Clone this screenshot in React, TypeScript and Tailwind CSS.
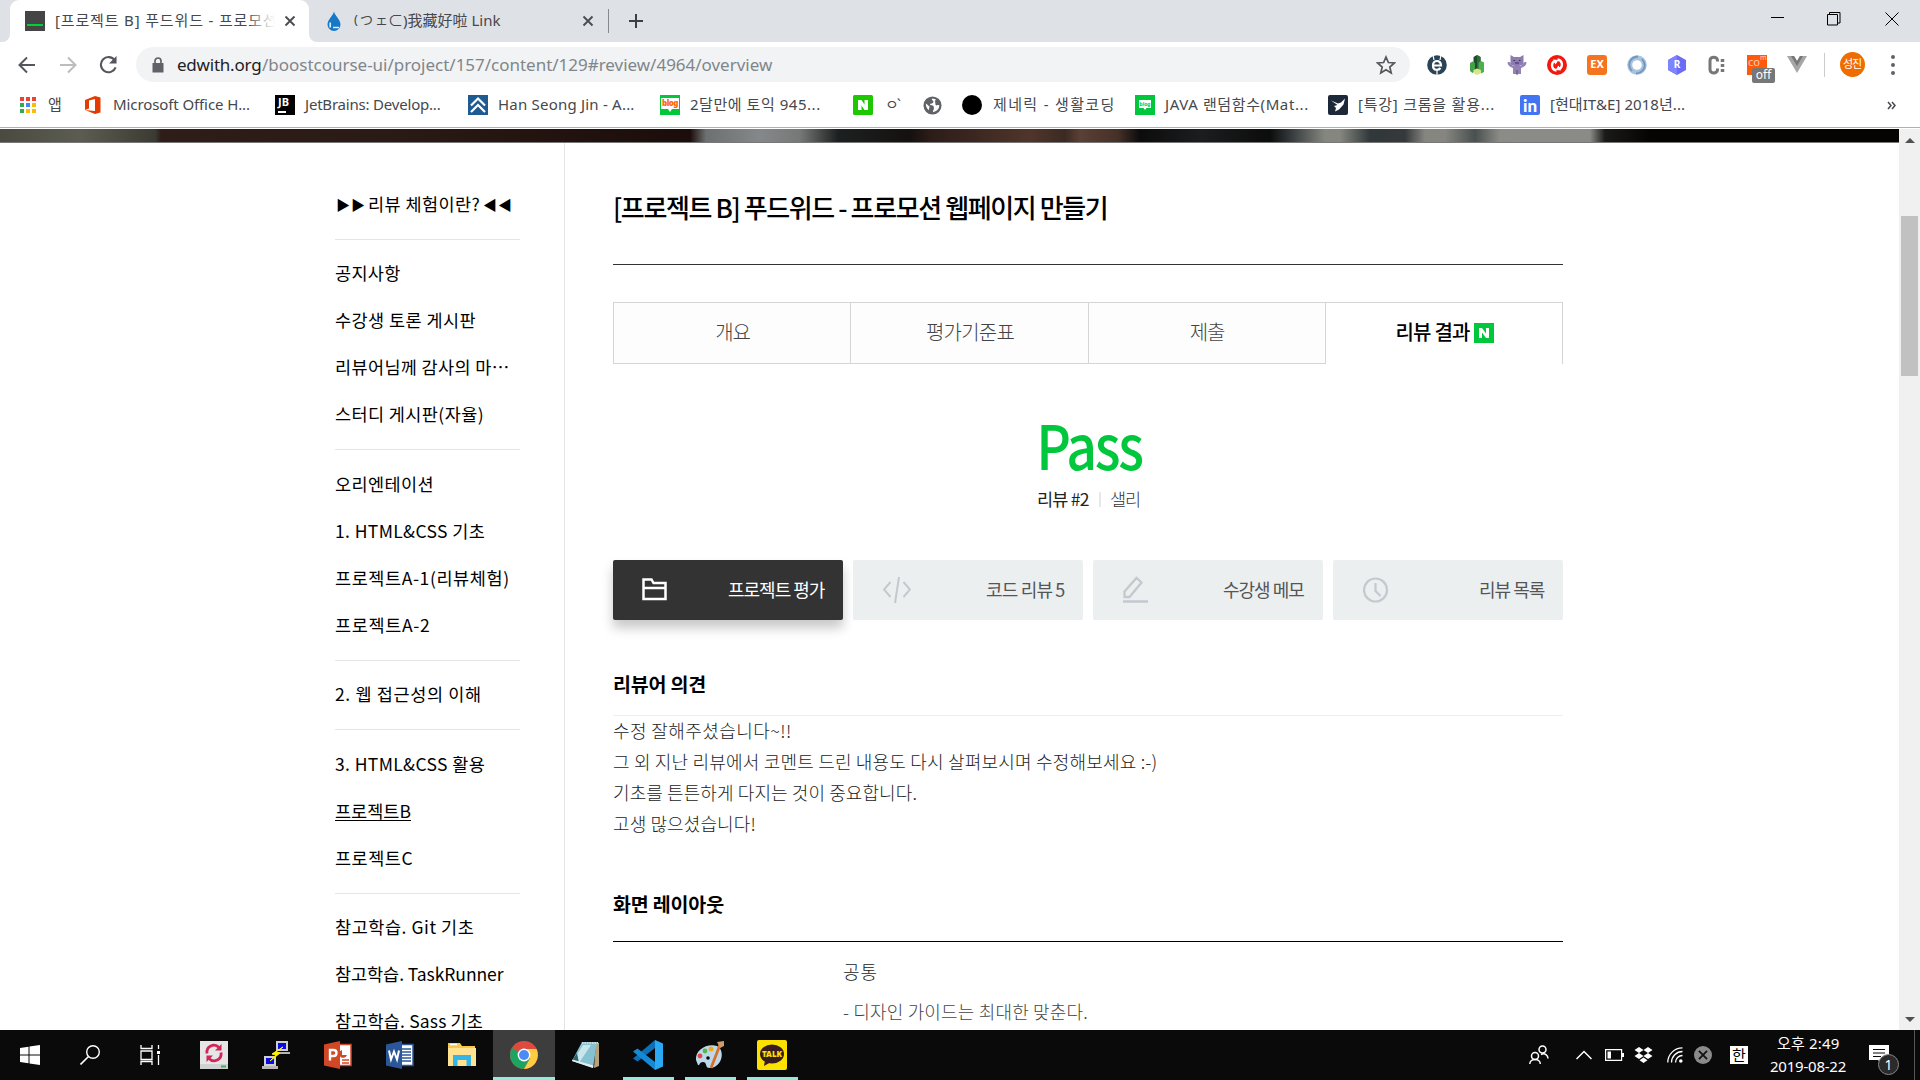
import { useLayoutEffect, useRef, useState } from "react";
import type { ReactNode } from "react";

const UI = "font-['Noto_Sans','Noto_Sans_CJK_KR',sans-serif]";
const PAGE = "font-['Noto_Sans_CJK_KR',sans-serif]";

/** Single line of text whose tracking is adjusted so that it fills `w` pixels. */
function Fit({ w, className = "", children }: { w: number; className?: string; children: string }) {
  const ref = useRef<HTMLSpanElement>(null);
  const [spacing, setSpacing] = useState(0);
  useLayoutEffect(() => {
    const natural = ref.current!.offsetWidth;
    setSpacing((w - natural) / Math.max(1, [...children].length - 1));
  }, [w, children]);
  return (
    <span className={`inline-block shrink-0 whitespace-nowrap ${className}`} style={{ width: w }}>
      <span ref={ref} className="inline-block" style={{ letterSpacing: spacing }}>{children}</span>
    </span>
  );
}

function Svg({ s = 20, vb = "0 0 20 20", className = "", children }: { s?: number; vb?: string; className?: string; children: ReactNode }) {
  return (
    <svg width={s} height={s} viewBox={vb} fill="none" className={`shrink-0 ${className}`}>
      {children}
    </svg>
  );
}

function CloseX() {
  return (
    <Svg s={12} vb="0 0 12 12">
      <path d="M1.5 1.5l9 9M10.5 1.5l-9 9" stroke="#4a4d51" strokeWidth="1.9" />
    </Svg>
  );
}

function TabStrip() {
  return (
    <div className="flex h-[42px] bg-[#dee1e6] text-[15px] text-[#45484c]">
      <div className="w-[10px] bg-white">
        <div className="h-full rounded-br-[8px] bg-[#dee1e6]" />
      </div>
      <div className="flex w-[299px] items-center rounded-t-[9px] bg-white pl-[15px]">
        <div className="flex h-5 w-5 items-end justify-center bg-[#454545] pb-[5px]">
          <div className="h-[2px] w-4 bg-[#00d13a]" />
        </div>
        <div className="relative mb-[2px] ml-[10px] w-[220px] overflow-hidden">
          <Fit w={222}>[프로젝트 B] 푸드위드 - 프로모션</Fit>
          <div className="absolute inset-y-0 right-0 w-6 bg-linear-to-r from-white/20 to-white" />
        </div>
        <div className="ml-[9px]"><CloseX /></div>
      </div>
      <div className="w-[9px] bg-white">
        <div className="h-full rounded-bl-[8px] bg-[#dee1e6]" />
      </div>
      <div className="flex items-center pl-[9px]">
        <svg width="14" height="20" viewBox="0 0 14 20" className="shrink-0">
          <path d="M7 0.5C8 5 13.5 8.5 13.5 13.5A6.4 6.4 0 0 1 .5 13.5C.5 8.500 6 5 7 .5z" fill="#1679c8" />
          <path d="M3.200 11.500v5M6 16.500h6" stroke="#fff" strokeWidth="1.700" opacity=".85" />
        </svg>
        <Fit w={34} className="mb-[2px] ml-[13px] text-[13px]">(つェ</Fit>
        <Fit w={112} className="mb-[2px]">⊂)我藏好啦 Link</Fit>
        <div className="ml-[82px]"><CloseX /></div>
        <div className="ml-[14px] h-6 w-px bg-[#85888c]" />
        <Svg s={16} vb="0 0 16 16" className="ml-[19px]">
          <path d="M8 1v14M1 8h14" stroke="#3c4043" strokeWidth="2" />
        </Svg>
      </div>
      <div className="ml-auto flex items-start pt-3 pr-[21px]">
        <Svg s={14} vb="0 0 14 14"><path d="M0 5.500h13" stroke="#000" /></Svg>
        <Svg s={14} vb="0 0 14 14" className="ml-[42px]">
          <path d="M.5 2.500h10v10.500H.5zM2.500 2.500v-2h10.500v10.500h-2.500" stroke="#000" />
        </Svg>
        <Svg s={14} vb="0 0 14 14" className="ml-[44px]"><path d="M.5.5l13 13M13.500.5l-13 13" stroke="#000" /></Svg>
      </div>
    </div>
  );
}

function Extensions() {
  return (
    <div className="ml-[17px] flex items-center gap-5">
      <Svg>
        <circle cx="10" cy="10" r="9.800" fill="#2a4456" />
        <path d="M6 10.500h8c0-6-8-6-8 0s6 4.500 7.500 2.500" stroke="#fff" strokeWidth="2.200" />
        <path d="M10 15v5M6 0l1 5M14 0l-1 5" stroke="#fff" strokeWidth="1.200" />
      </Svg>
      <Svg>
        <path d="M6.500 2L10 0l3.500 2v13h-7z" fill="#1d4d2b" /><path d="M10 0l3.500 2v13l-3.500-1z" fill="#2f6d36" />
        <path d="M3 8l2.500-1.500L8 8v8l-2.500 2L3 16z" fill="#43a047" /><path d="M11.500 7.500L14 6l3 1.500V17l-3 1.500-2.500-2z" fill="#4caf50" />
        <path d="M6.500 15l3.500-1.500 4 1.500v3l-4 2-3.500-2z" fill="#d5e58c" />
      </Svg>
      <Svg>
        <path d="M3.500 0L7 2h6l3.500-2v8c0 2-2 3-6.500 3s-6.500-1-6.500-3z" fill="#8c7bb0" />
        <path d="M.5 7h2L6 11h8l3.500-4h2c0 3-2 5-5.500 6v6H6v-6C2.500 12 .5 10 .5 7z" fill="#9283b4" />
        <path d="M6.500 5.500h1.500M12 5.500h1.500M8 8h4" stroke="#3c2f5c" strokeWidth="1.200" /><path d="M10 15v5" stroke="#5c4d80" />
      </Svg>
      <Svg>
        <circle cx="10" cy="10" r="10" fill="#f3170d" />
        <path d="M9.500 15.500C4.500 15 3.500 8.500 7.500 6M10.500 4.500c5 .5 6 7 2 9.500" stroke="#fff" strokeWidth="2.300" />
        <path d="M6 4.500l5.500.5-3 4.500zM14 15.500l-5.500-.5 3-4.500z" fill="#fff" />
      </Svg>
      <div className="flex h-5 w-5 items-center justify-center rounded-[3px] bg-[#f5751f] text-[11px] font-bold text-white">EX</div>
      <Svg>
        <circle cx="10" cy="10" r="7.300" stroke="#a9c3dd" strokeWidth="5" />
        <path d="M5 16C-1 9 4 2 11 1.500M15 4c6 7 1 14-6 14.500" stroke="#6f97c0" strokeWidth="1.800" />
      </Svg>
      <div className="relative flex h-5 w-5 items-center justify-center text-[10px] font-bold text-white">
        <Svg className="absolute"><path d="M10 0l9 5v10l-9 5-9-5V5z" fill="#6b6df5" /><path d="M1 5l9-5v20l-9-5z" fill="#7f83ff" /></Svg>
        <span className="relative">R</span>
      </div>
      <Svg>
        <path d="M10.500 6.500V5.500c0-4.500-7.500-4.500-7.500 0v9c0 4.500 7.500 4.500 7.500 0v-1" stroke="#777" strokeWidth="3" />
        <path d="M15.500 4v14" stroke="#777" strokeWidth="3.500" strokeDasharray="3 2" />
      </Svg>
      <div className="relative h-5 w-5 bg-[#ff5a0c] text-white/70">
        <span className="absolute top-[2px] left-px text-[11px] leading-[10px]">co</span>
        <span className="absolute top-0 left-[13px] text-[7px] leading-[6px]">m</span>
        <span className="absolute top-[13px] left-[5px] flex h-[15px] w-[23px] items-center justify-center rounded-[2px] bg-[#777] text-[12px] leading-none text-white">off</span>
      </div>
      <Svg>
        <path d="M0 1h7l3 5 3-5h7L10 18z" fill="#a6a6a6" /><path d="M4 1h3l3 5 3-5h3l-6 10z" fill="#777" />
      </Svg>
    </div>
  );
}

function Toolbar() {
  return (
    <div className="flex h-[45px] items-center bg-white">
      <Svg s={18} vb="0 0 18 18" className="ml-[18px]"><path d="M17 9H2M9 1.500L1.500 9 9 16.500" stroke="#54575b" strokeWidth="2" /></Svg>
      <Svg s={18} vb="0 0 18 18" className="ml-[23px]"><path d="M1 9h15M9 1.500L16.500 9 9 16.500" stroke="#babcbe" strokeWidth="2" /></Svg>
      <Svg s={19} vb="0 0 20 20" className="ml-[22px]">
        <path d="M16.500 5.500A8 8 0 1 0 17.500 13" stroke="#54575b" strokeWidth="2.200" /><path d="M18.500 1v8h-8z" fill="#54575b" />
      </Svg>
      <div className="ml-[18px] flex h-[35px] w-[1274px] items-center rounded-full bg-[#f1f3f4] pl-4">
        <svg width="12" height="16" viewBox="0 0 12 16" className="shrink-0">
          <path d="M.5 6h11v9.500H.5z" fill="#5f6368" /><path d="M3 7V4a3 3 0 0 1 6 0v3" fill="none" stroke="#5f6368" strokeWidth="1.700" />
        </svg>
        <Fit w={85} className="ml-[13px] text-[17px] text-[#202124]">edwith.org</Fit>
        <Fit w={510} className="text-[17px] text-[#80868b]">/boostcourse-ui/project/157/content/129#review/4964/overview</Fit>
        <Svg s={20} className="mr-[14px] ml-auto">
          <path d="M10 2l2.400 5.500 6 .5-4.600 4 1.400 5.900L10 14.800l-5.200 3.100L6.200 12 1.600 8l6-.5z" stroke="#54575b" strokeWidth="1.700" />
        </Svg>
      </div>
      <Extensions />
      <div className="ml-[17px] h-6 w-px bg-[#c9cbce]" />
      <div className="ml-[15px] flex h-[25px] w-[25px] items-center justify-center rounded-full bg-[#ef6c00] text-[11px] text-white">
        <Fit w={19}>성진</Fit>
      </div>
      <div className="ml-[26px] flex w-1 flex-col gap-1">
        <div className="h-1 w-1 rounded-full bg-[#5f6368]" />
        <div className="h-1 w-1 rounded-full bg-[#5f6368]" />
        <div className="h-1 w-1 rounded-full bg-[#5f6368]" />
      </div>
    </div>
  );
}

const APP_COLORS = ["bg-[#ea4335]", "bg-[#ea4335]", "bg-[#ea4335]", "bg-[#34a853]", "bg-[#4285f4]", "bg-[#fbbc04]", "bg-[#34a853]", "bg-[#fbbc04]", "bg-[#fbbc04]"];

function BlogIcon({ small = false }: { small?: boolean }) {
  return (
    <div className="relative flex h-5 w-5 shrink-0 items-center justify-center bg-[#00c73c]">
      <Svg className="absolute inset-0">
        {small ? <path d="M4 5h12v8h-4.500L10 15l-1.500-2H4z" fill="#fff" /> : <path d="M1 3h18v11h-7l-2 3-2-3H1z" fill="#fff" />}
      </Svg>
      <span className={small ? "relative mb-[2px] text-[5px] leading-none font-bold text-[#00c73c]" : "relative mb-1 text-[8px] leading-none font-black tracking-[-0.5px] text-[#ff6a00]"}>blog</span>
    </div>
  );
}

function Bookmarks() {
  return (
    <div className="flex h-[40px] items-center bg-white pb-[4px] text-[15px] text-[#45484c]">
      <div className="ml-5 grid w-4 shrink-0 grid-cols-3 gap-[2px]">
        {APP_COLORS.map((c, i) => <div key={i} className={`h-1 w-1 ${c}`} />)}
      </div>
      <Fit w={14} className="mb-[2px] ml-3">앱</Fit>
      <svg width="16" height="18" viewBox="0 0 16 18" className="ml-[23px] shrink-0">
        <path d="M0 4l10-4 5.500 1.500v15L10 18 0 14l10 1V3L4 4.500v8L0 14z" fill="#e43c00" />
      </svg>
      <Fit w={137} className="mb-[2px] ml-3">Microsoft Office H...</Fit>
      <div className="ml-[25px] flex h-5 w-5 shrink-0 flex-col bg-black pl-[3px] text-[11px] leading-[13px] font-bold text-white">JB<div className="mt-[3px] h-[2px] w-2 bg-white" /></div>
      <Fit w={136} className="mb-[2px] ml-[10px]">JetBrains: Develop...</Fit>
      <Svg className="ml-[27px]"><path d="M0 0h20v20H0z" fill="#1f5b93" /><path d="M3 10.500l7-7 7 7M3 17l7-7 7 7" stroke="#fff" strokeWidth="2.200" /></Svg>
      <Fit w={136} className="mb-[2px] ml-[10px]">Han Seong Jin - A...</Fit>
      <div className="ml-[26px]"><BlogIcon /></div>
      <Fit w={130} className="mb-[2px] ml-[10px]">2달만에 토익 945...</Fit>
      <Svg className="ml-[33px]"><rect width="20" height="20" rx="1.500" fill="#1ec800" /><path d="M5 15V5h3.500l3 4.600V5H15v10h-3.500l-3-4.600V15z" fill="#fff" /></Svg>
      <Fit w={16} className="mb-[2px] ml-[12px]">ㅇ`</Fit>
      <Svg s={19} className="ml-[22px]">
        <circle cx="10" cy="10" r="9.500" fill="#5f6368" />
        <path d="M9.500 2.500c-1 2 3 2.500 1 4.500s-3 0-3 2.500c3 0 4 1 4 3s-1 2-1 4.500c6-1 7-6 6.500-7.500-2 0-2.500 1-3.500 0s0-3-1-4l1-2M3 8c1.500 1 3 3 4 3l-1 4c-2-2-3-4-3-7z" fill="#fff" />
      </Svg>
      <div className="ml-5 h-5 w-5 shrink-0 rounded-full bg-black" />
      <Fit w={121} className="mb-[2px] ml-[11px]">제네릭 - 생활코딩</Fit>
      <div className="ml-[21px]"><BlogIcon small /></div>
      <Fit w={143} className="mb-[2px] ml-[10px]">JAVA 랜덤함수(Mat...</Fit>
      <Svg className="ml-[20px]"><rect width="20" height="20" rx="2" fill="#1d2838" /><path d="M3 5.500l7 3 3-1 4-4-1.500 6-4.500 5-4 2 1-3.500-2-2 3.500-1z" fill="#fff" /></Svg>
      <Fit w={136} className="mb-[2px] ml-[10px]">[특강] 크롬을 활용...</Fit>
      <div className="ml-[26px] flex h-5 w-5 shrink-0 items-center justify-center rounded-[2px] bg-[#4374f2] font-['Lato'] text-[17px] leading-none font-black text-white">in</div>
      <Fit w={135} className="mb-[2px] ml-[10px]">[현대IT&amp;E] 2018년...</Fit>
      <Svg s={9} vb="0 0 9 9" className="mr-[24px] ml-auto"><path d="M1 1l3 3.500L1 8M5 1l3 3.500L5 8" stroke="#45484c" strokeWidth="1.500" /></Svg>
    </div>
  );
}

const SIDEBAR: { label: string; w: number; current?: boolean }[][] = [
  [{ label: "공지사항", w: 65 }, { label: "수강생 토론 게시판", w: 141 }, { label: "리뷰어님께 감사의 마⋯", w: 174 }, { label: "스터디 게시판(자율)", w: 149 }],
  [{ label: "오리엔테이션", w: 99 }, { label: "1. HTML&CSS 기초", w: 150 }, { label: "프로젝트A-1(리뷰체험)", w: 174 }, { label: "프로젝트A-2", w: 95 }],
  [{ label: "2. 웹 접근성의 이해", w: 146 }],
  [{ label: "3. HTML&CSS 활용", w: 150 }, { label: "프로젝트B", w: 76, current: true }, { label: "프로젝트C", w: 78 }],
  [{ label: "참고학습. Git 기초", w: 139 }, { label: "참고학습. TaskRunner", w: 169 }, { label: "참고학습. Sass 기초", w: 148 }],
];

function Sidebar() {
  return (
    <nav className="ml-[335px] w-[230px] shrink-0 border-r border-[#e5e5e5] pt-[37px] pr-[44px] text-[17.5px] text-black">
      <div className="flex h-[60px] items-start border-b border-[#e5e5e5]">
        <div className="flex h-[47px] items-center pt-px">
          <Fit w={29} className="ml-px text-[14px]">▶▶</Fit>
          <Fit w={112} className="ml-[3px]">리뷰 체험이란?</Fit>
          <Fit w={29} className="ml-[3px] text-[14px]">◀◀</Fit>
        </div>
      </div>
      {SIDEBAR.map((group, i) => (
        <ul key={i} className="border-b border-[#e5e5e5] pt-[10px] pb-[11.400px]">
          {group.map((item) => (
            <li key={item.label} className="flex h-[47px] items-center">
              <Fit w={item.w} className={item.current ? "border-b border-black leading-[19px]" : ""}>{item.label}</Fit>
            </li>
          ))}
        </ul>
      ))}
    </nav>
  );
}

const TABS = [{ label: "개요", w: 36 }, { label: "평가기준표", w: 89 }, { label: "제출", w: 36 }];

const ACTIONS = [
  { label: "프로젝트 평가", w: 97, icon: <path d="M2.500 3.500h8l2 3.500h12v16h-22zM2.500 12h22" strokeWidth="2.500" /> },
  { label: "코드 리뷰 5", w: 79, icon: <path d="M7.500 6L1 13.500l6.500 7.500M20.500 6l6.500 7.500-6.500 7.500M16 1l-4 26" strokeWidth="2" /> },
  { label: "수강생 메모", w: 82, icon: <path d="M1.500 21v-5.500L13.500 2l5 4.500L6.500 21zM0 25.500h25" strokeWidth="2.300" /> },
  { label: "리뷰 목록", w: 66, icon: <><circle cx="12.500" cy="14" r="11.500" strokeWidth="2.200" /><path d="M12.500 7v8l5 5" strokeWidth="2.200" /></> },
];

function Content() {
  return (
    <main className="ml-12 w-[950px] shrink-0 pt-[44px]">
      <h1 className="flex h-[42px] items-center pb-[3px] text-[26px] font-medium text-black"><Fit w={496}>[프로젝트 B] 푸드위드 - 프로모션 웹페이지 만들기</Fit></h1>
      <div className="mt-[35px] h-px bg-[#333]" />

      <div className="mt-[37px] grid h-[62px] grid-cols-4 border-l border-[#d5d5d5] text-[20px]">
        {TABS.map((t) => (
          <div key={t.label} className="flex items-center justify-center border-y border-r border-[#d5d5d5] bg-[#fdfdfd] pb-[2px] pl-[2px] font-light text-[#444]">
            <Fit w={t.w}>{t.label}</Fit>
          </div>
        ))}
        <div className="flex items-center justify-center gap-1 border-t border-r border-[#d5d5d5] pl-[2px] font-medium text-black">
          <Fit w={75} className="mb-[3px]">리뷰 결과</Fit>
          <Svg className="mb-px"><path d="M0 0h20v20H0z" fill="#00c73c" /><path d="M5 15V5h3l4 5.500V5h3v10h-3L8 9.500V15z" fill="#fff" /></Svg>
        </div>
      </div>

      <div className="mt-[48px] flex h-[62px] items-center justify-center pl-[3px] text-[61px] leading-none font-medium text-[#00c73c]">
        <Fit w={122} className="scale-x-[0.88]">Pass</Fit>
      </div>
      <div className="mt-[13px] flex h-6 items-center justify-center pl-[2px] text-[17.5px] leading-none">
        <Fit w={53} className="text-[#222]">리뷰 #2</Fit>
        <div className="mx-[9px] h-[15px] w-[2px] bg-[#e8e8e8]" />
        <Fit w={31} className="font-light text-[#333]">샐리</Fit>
      </div>

      <div className="mt-[49px] grid h-[60px] grid-cols-4 gap-[10px]">
        {ACTIONS.map((a, i) => (
          <div
            key={a.label}
            className={
              i === 0
                ? "flex items-center justify-between rounded-[2px] bg-[#333] pr-[18px] pl-[28px] text-[18px] text-white shadow-[0_8px_12px_rgba(0,0,0,0.22)]"
                : "flex items-center justify-between rounded-[2px] bg-[#ebeff0] pr-[18px] pl-[30px] text-[18px] text-[#555]"
            }
          >
            <svg width="28" height="28" viewBox="0 0 28 28" fill="none" className={i === 0 ? "stroke-white" : "stroke-[#c3c9cf]"}>{a.icon}</svg>
            <Fit w={a.w} className="mb-[2px]">{a.label}</Fit>
          </div>
        ))}
      </div>

      <h2 className="mt-[50px] flex h-7 items-center text-[19.5px] font-bold text-black"><Fit w={93}>리뷰어 의견</Fit></h2>
      <div className="mt-[17px] border-t border-[#eee] text-[18px] font-light text-[#222]">
        <p className="flex h-[31px] items-center pb-[2px]"><Fit w={178}>수정 잘해주셨습니다~!!</Fit></p>
        <p className="flex h-[31px] items-center pb-[2px]"><Fit w={544}>그 외 지난 리뷰에서 코멘트 드린 내용도 다시 살펴보시며 수정해보세요 :-)</Fit></p>
        <p className="flex h-[31px] items-center pb-[2px]"><Fit w={304}>기초를 튼튼하게 다지는 것이 중요합니다.</Fit></p>
        <p className="flex h-[31px] items-center pb-[2px]"><Fit w={143}>고생 많으셨습니다!</Fit></p>
      </div>

      <h2 className="mt-[50px] flex h-7 items-center text-[19.5px] font-bold text-black"><Fit w={111}>화면 레이아웃</Fit></h2>
      <div className="mt-[23px] border-t border-black pt-[10px] pl-[230px] text-[18px]">
        <p className="flex h-10 items-center pb-[2px] text-[#222]"><Fit w={34} className="font-light">공통</Fit></p>
        <p className="flex h-10 items-center pb-[2px] text-[#444]"><Fit w={245} className="font-light">- 디자인 가이드는 최대한 맞춘다.</Fit></p>
      </div>
    </main>
  );
}

function Scrollbar() {
  return (
    <div className="ml-auto flex w-[21px] flex-col items-center justify-between bg-[#f0f0f0] pb-[5px]">
      <div className="flex w-[17px] flex-col items-center">
        <Svg s={10} vb="0 0 10 10" className="mt-[6px]"><path d="M0 8l5-5 5 5z" fill="#505050" /></Svg>
        <div className="mt-[71px] h-[160px] w-[17px] bg-[#c1c1c1]" />
      </div>
      <Svg s={10} vb="0 0 10 10"><path d="M0 2l5 5 5-5z" fill="#505050" /></Svg>
    </div>
  );
}

function TaskIcon({ state = "", children }: { state?: "" | "active" | "open"; children: ReactNode }) {
  return (
    <div className={state === "active" ? "flex h-full w-[62px] flex-col items-center bg-[#3d3d3d]" : "flex h-full w-[62px] flex-col items-center"}>
      <div className="flex h-[47px] flex-1 items-center pt-[2px]">{children}</div>
      <div className={state === "active" ? "h-[3px] w-full bg-[#91ebdd]" : state === "open" ? "h-[3px] w-[51px] bg-[#91ebdd]" : "h-[3px]"} />
    </div>
  );
}

function Taskbar() {
  return (
    <div className="flex h-[50px] items-stretch bg-[#0a0a0a] text-white">
      <div className="flex w-[60px] items-center justify-center">
        <Svg><path d="M0 3l8.500-1.200v7.700H0zM9.500 1.600L20 0v9.500H9.500zM0 10.500h8.500v7.700L0 17zM9.500 10.500H20V20L9.500 18.400z" fill="#fff" /></Svg>
      </div>
      <div className="flex w-[60px] items-center justify-center">
        <Svg><circle cx="13" cy="7" r="6.300" stroke="#fff" strokeWidth="1.400" /><path d="M8.500 11.500L.5 19.500" stroke="#fff" strokeWidth="1.600" /></Svg>
      </div>
      <div className="flex w-[63px] items-center pl-5">
        <Svg><path d="M1 0v3.500h11V0M1 6h11v8.500H1zM1 20v-3.500h11V20M18.500 0v4M18.500 10v10" stroke="#fff" strokeWidth="1.300" /><path d="M17 6h3v3h-3z" fill="#fff" /></Svg>
      </div>
      <div className="flex">
        <TaskIcon>
          <Svg s={28} vb="0 0 28 28"><path d="M0 0h28v28H0z" fill="#e6e6e6" /><path d="M0 23h28v5H0z" fill="#cfd2d2" /><path d="M21 24.500h5v2h-5z" fill="#4caf50" /><path d="M7 12.500a7 7 0 0 1 12-6M21 11.500a7 7 0 0 1-12 6" stroke="#d0265a" strokeWidth="2.800" /><path d="M21.500 3v6.500H15zM6.500 21v-6.500H13z" fill="#d0265a" /></Svg>
        </TaskIcon>
        <TaskIcon>
          <Svg s={28} vb="0 0 28 28"><path d="M14 0h12v10H14zM2 15h12v10H2z" fill="#cfcfcf" /><path d="M16 2h8v6h-8zM4 17h8v6H4z" fill="#0a0ae8" /><path d="M12 11h16v2H14zM0 25h16v3H0z" fill="#b5b5b5" /><path d="M21 6l-7 5 4 1-10 8 6-6-4-1z" fill="#fff200" stroke="#fff200" /></Svg>
        </TaskIcon>
        <TaskIcon>
          <Svg s={28} vb="0 0 28 28"><path d="M14 3.500h13v21H14z" fill="#fff" stroke="#d24726" strokeWidth="1.500" /><path d="M18 9a4 4 0 1 0 5 5h-5z" fill="#d24726" /><path d="M18 19h7M18 22h7" stroke="#d24726" strokeWidth="1.500" /><path d="M0 3.500L16 0v28L0 24.500z" fill="#d24726" /><path d="M6 19.500V9h3.500c4 0 4 6 0 6H6" stroke="#fff" strokeWidth="2.400" /></Svg>
        </TaskIcon>
        <TaskIcon>
          <Svg s={28} vb="0 0 28 28"><path d="M14 3.500h13v21H14z" fill="#fff" stroke="#2b579a" strokeWidth="1.500" /><path d="M16 8h9M16 11h9M16 14h9M16 17h9M16 20h9" stroke="#2b579a" strokeWidth="1.400" /><path d="M0 3.500L16 0v28L0 24.500z" fill="#2b579a" /><path d="M3 9.500l2 9 3-8 3 8 2-9" stroke="#fff" strokeWidth="2" /></Svg>
        </TaskIcon>
        <TaskIcon>
          <Svg s={28} vb="0 0 28 28"><path d="M0 2h12l2 3h13v20H0z" fill="#f5c84c" /><path d="M0 7h28v18H0z" fill="#ffe391" /><path d="M5 25V14h18v11h-4.500v-6h-9v6z" fill="#35b4e8" /><path d="M2 3.500h7" stroke="#fff" strokeWidth="1.500" /></Svg>
        </TaskIcon>
        <TaskIcon state="active">
          <Svg s={28} vb="0 0 28 28">
            <circle cx="14" cy="14" r="14" fill="#dd4b3e" />
            <path d="M14 14L1.900 7A14 14 0 0 0 14 28l6-10.500z" fill="#1da362" /><path d="M14 28A14 14 0 0 0 26.500 8H14l6 9.500z" fill="#ffcd42" />
            <circle cx="14" cy="14" r="6.400" fill="#fff" /><circle cx="14" cy="14" r="5" fill="#4c8bf5" />
          </Svg>
        </TaskIcon>
        <TaskIcon>
          <Svg s={28} vb="0 0 28 28"><path d="M24 1l3 1v23l-5 2z" fill="#b8a27c" /><path d="M10 1h15l-4 26L0 20z" fill="#86c2d2" /><path d="M11 4h8L7 22l-6-2z" fill="#c9e6ec" /><path d="M0 20l5-8 2 10z" fill="#2b6470" /><path d="M21 27L0 20l.5-1.500 21 6z" fill="#e4ecec" /><path d="M10 2h16" stroke="#d8d8d8" strokeWidth="2" strokeDasharray="1.500 1" /></Svg>
        </TaskIcon>
        <TaskIcon state="open">
          <Svg s={30} vb="0 0 30 30"><path d="M22 0v8L4.500 21.500 0 18.500z" fill="#0b70b8" /><path d="M22 30v-8L4.500 8.500 0 11.500z" fill="#1489d6" /><path d="M22 0l8 3.500v23L22 30z" fill="#2aa8f2" /></Svg>
        </TaskIcon>
        <TaskIcon state="open">
          <Svg s={30} vb="0 0 30 30"><path d="M1 20C0 10 12 3 22 6c8 4 6 20-6 22-7 1-3-6-8-6-4 0-3 4-5 3z" fill="#bcd9ec" /><circle cx="5" cy="16" r="2.400" fill="#e04a3c" /><circle cx="10" cy="11" r="2.400" fill="#53b848" /><circle cx="16" cy="9" r="2.500" fill="#f5a81c" /><circle cx="13" cy="18" r="1.800" fill="#0a0a0a" /><path d="M25 5l-9 23" stroke="#d9702a" strokeWidth="2.800" /><path d="M22 2l7-1v5l-4 2z" fill="#cf9a68" /></Svg>
        </TaskIcon>
        <TaskIcon state="open">
          <div className="relative flex h-[30px] w-[30px] items-center justify-center rounded-[2px] bg-[#fae100]">
            <Svg s={30} vb="0 0 30 30" className="absolute"><ellipse cx="15" cy="14" rx="12" ry="9.500" fill="#371d1e" /><path d="M8 20l-1 6 7-4z" fill="#371d1e" /></Svg>
            <span className="relative mb-[2px] text-[8px] leading-none font-black text-[#fae100]">TALK</span>
          </div>
        </TaskIcon>
      </div>
      <div className="ml-auto flex items-center">
        <Svg s={20}><circle cx="6" cy="11" r="3.500" stroke="#fff" strokeWidth="1.500" /><path d="M.800 19c0-6 10.500-6 10.500 0" stroke="#fff" strokeWidth="1.500" /><circle cx="13.500" cy="4.500" r="3.500" stroke="#fff" strokeWidth="1.500" /><path d="M12 9.500c4-2 7 1 7 4" stroke="#fff" strokeWidth="1.500" /></Svg>
        <Svg s={16} vb="0 0 16 16" className="ml-[27px]"><path d="M.5 12L8 4.500 15.500 12" stroke="#fff" strokeWidth="1.500" /></Svg>
        <svg width="19" height="12" viewBox="0 0 19 12" fill="none" className="ml-[13px]"><path d="M.6.6h16v10.800H.6z" stroke="#fff" strokeWidth="1.200" /><path d="M2.500 2.500H6v7H2.500zM17 4h2v4h-2z" fill="#fff" /></svg>
        <svg width="19" height="18" viewBox="0 0 19 18" className="ml-[10px]"><path d="M5 1l4.500 3L5 7 .5 4zM14 1l4.500 3L14 7 9.500 4zM5 7l4.500 3L5 13 .5 10zM14 7l4.500 3-4.500 3-4.500-3zM9.500 11.500l4 2.800-4 2.700-4-2.700z" fill="#fff" /></svg>
        <Svg s={16} vb="0 0 16 16" className="ml-[14px]"><path d="M.800 15.500A14.700 14.700 0 0 1 15.500.800M4.500 15.500a11 11 0 0 1 11-11M8.500 15.500a7 7 0 0 1 7-7" stroke="#fff" strokeWidth="1.300" /><circle cx="13.800" cy="14" r="1.800" fill="#fff" /></Svg>
        <Svg s={18} className="ml-[11px]"><circle cx="10" cy="10" r="10" fill="#8b8b8b" /><path d="M5.500 5.500l9 9M14.500 5.500l-9 9" stroke="#111" strokeWidth="2" /></Svg>
        <div className="ml-[18px] flex h-[18px] w-[18px] items-center justify-center bg-white text-[15px] leading-none text-black">한</div>
        <div className="ml-[22px] flex w-[76px] flex-col items-center pb-px text-[15px] leading-[23px]">
          <Fit w={62}>오후 2:49</Fit>
          <Fit w={76}>2019-08-22</Fit>
        </div>
        <div className="relative ml-[23px] h-5 w-5">
          <Svg><path d="M0 0h20v15h-7v4l-4-4H0z" fill="#fff" /><path d="M4 4.500h12M4 8h12M4 11.500h8" stroke="#0a0a0a" strokeWidth="1.200" /></Svg>
          <span className="absolute top-[9px] left-[9px] flex h-[21px] w-[21px] items-center justify-center rounded-full border border-[#888] bg-[#2b2b2b] text-[14px]">1</span>
        </div>
        <div className="ml-[25px] h-full w-px bg-[#555]" />
        <div className="w-[5px]" />
      </div>
    </div>
  );
}

export default function App() {
  return (
    <div className={`flex h-[1080px] w-[1920px] flex-col overflow-hidden bg-white ${UI}`}>
      <TabStrip />
      <Toolbar />
      <Bookmarks />
      <div className="mb-px h-px bg-[#aeb0b2]" />
      <div className={`flex h-[901px] ${PAGE}`}>
        <div className="w-[1899px]">
          <div className="h-[14px] border-b border-[#777] bg-[linear-gradient(90deg,#4a4a40_0,#5c5d50_80px,#3c3b33_155px,#2f1d17_161px,#2a1a15_400px,#1b0d0b_690px,#6c7070_706px,#85888a_760px,#777_800px,#1d2020_838px,#141110_910px,#2c1c17_930px,#50352b_1030px,#3c2a22_1065px,#5a4036_1080px,#463028_1118px,#0c0c0c_1140px,#1c1d1f_1200px,#0c0c0c_1270px,#33383a_1290px,#85867f_1325px,#85867f_1340px,#30383a_1370px,#35393a_1405px,#85867f_1425px,#85867f_1445px,#4a5050_1475px,#8b8c87_1500px,#8a8b86_1590px,#1a1a18_1605px,#050403_1650px)]" />
          <div className="flex h-[887px] overflow-hidden">
            <Sidebar />
            <Content />
          </div>
        </div>
        <Scrollbar />
      </div>
      <Taskbar />
    </div>
  );
}
